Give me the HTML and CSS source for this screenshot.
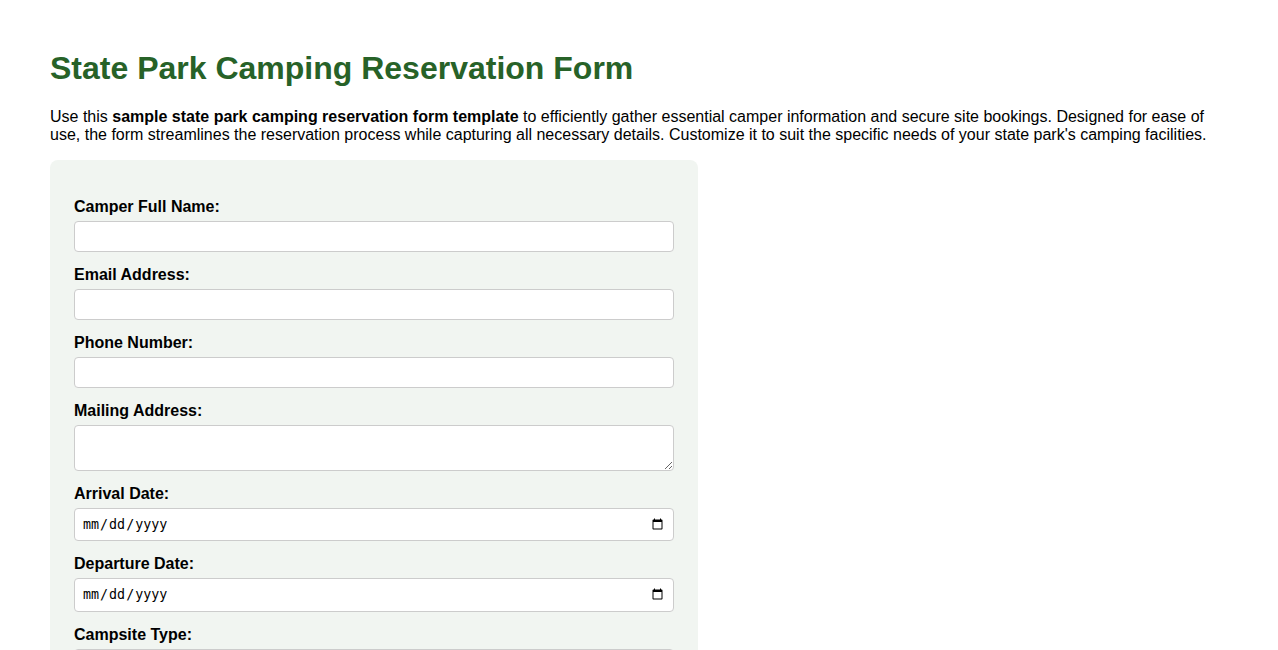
FILE: index.html
```html
<!DOCTYPE html>
<html lang="en">
<head>
<meta charset="utf-8">
<title>State Park Camping Reservation Form</title>
<link rel="stylesheet" href="styles.css">
</head>
<body>
<div class="page">
  <h1 class="title">State Park Camping Reservation Form</h1>
  <p class="intro">Use this <strong>sample state park camping reservation form template</strong> to efficiently gather essential camper information and secure site bookings. Designed for ease of use, the form streamlines the reservation process while capturing all necessary details. Customize it to suit the specific needs of your state park's camping facilities.</p>
  <form class="form">
    <label class="label" for="name">Camper Full Name:</label>
    <input class="field" type="text" id="name">
    <label class="label" for="email">Email Address:</label>
    <input class="field" type="email" id="email">
    <label class="label" for="phone">Phone Number:</label>
    <input class="field" type="tel" id="phone">
    <label class="label" for="address">Mailing Address:</label>
    <textarea class="field area" id="address"></textarea>
    <label class="label" for="arrival">Arrival Date:</label>
    <input class="field" type="date" id="arrival">
    <label class="label" for="departure">Departure Date:</label>
    <input class="field" type="date" id="departure">
    <label class="label" for="site">Campsite Type:</label>
    <select class="field" id="site">
      <option>Tent Site</option>
      <option>RV Site</option>
      <option>Cabin</option>
    </select>
    <label class="label" for="guests">Number of Guests:</label>
    <input class="field" type="number" id="guests">
    <button class="submit" type="submit">Submit Reservation</button>
  </form>
</div>
</body>
</html>
```
FILE: styles.css
```css
html, body {
  margin: 0;
  padding: 0;
  background: #ffffff;
}
body {
  font-family: "Liberation Sans", Arial, sans-serif;
  color: #000;
}
.page {
  padding: 29px 50px 40px;
}
.title {
  font-size: 32px;
  font-weight: bold;
  color: #276228;
  margin: 21px 0;
}
.intro {
  font-size: 16px;
  margin: 0 0 16px;
}
.form {
  width: 600px;
  background: #f1f5f1;
  border-radius: 8px;
  padding: 24px;
}
.label {
  display: block;
  font-weight: bold;
  font-size: 16px;
  margin: 14px 0 5px;
}
.field {
  display: block;
  width: 100%;
  box-sizing: border-box;
  padding: 7px;
  border: 1px solid #ccc;
  border-radius: 4px;
  background: #fff;
  margin: 0;
}
.area {
  resize: vertical;
}
.submit {
  margin-top: 20px;
  padding: 10px 20px;
  background: #276228;
  color: #fff;
  border: none;
  border-radius: 4px;
  font-size: 16px;
}
```
